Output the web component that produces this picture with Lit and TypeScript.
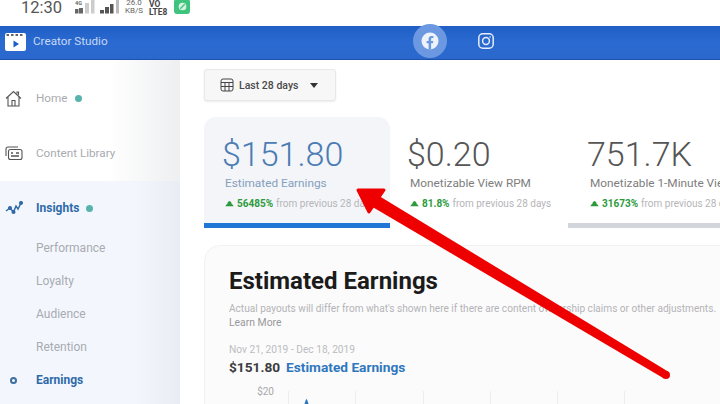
import { LitElement, html, css, svg } from "lit";
import { customElement } from "lit/decorators.js";

const up = html`<svg class="up" viewBox="0 0 10 7" width="9" height="7"><path d="M0.5 6.5 Q1 4.6 2.4 4.4 Q2.8 1 5 0.6 Q7.2 1 7.6 4.4 Q9 4.6 9.5 6.5 Z" fill="#2c9a3c"/></svg>`;

@customElement("app-root")
export class AppRoot extends LitElement {
  static styles = css`
    :host { display: block; width: 720px; height: 404px; overflow: hidden; position: relative; background: #fff; font-family: Roboto, "Liberation Sans", sans-serif; }
    .status { height: 26px; background: #fff; display: flex; align-items: flex-start; padding-left: 21px; color: #555; overflow: hidden; }
    .time { font-size: 16.5px; line-height: 16px; width: 40px; flex: none; white-space: nowrap; }
    .sig1 { display: block; margin-left: 7px; flex: none; }
    .sig2 { display: block; margin-left: 5px; flex: none; }
    .speed { font-size: 8px; line-height: 7.5px; width: 20px; text-align: center; margin-left: 4px; margin-top: -1px; color: #666; flex: none; }
    .volte { font-size: 8.4px; line-height: 8px; font-weight: 700; width: 19px; margin-left: 5px; color: #444; flex: none; }
    .appi { width: 16px; height: 15px; border-radius: 3px; background: #3fc47e; margin-left: 6px; margin-top: -1px; display: flex; align-items: center; justify-content: center; flex: none; }
    .header { height: 34px; background: linear-gradient(#1f5fc6, #2b6ad0 50%, #2a68cd); border-bottom: 1px solid #1d52ad; box-sizing: border-box; display: flex; align-items: center; position: relative; padding-left: 5px; color: #c6d8f5; font-size: 11.7px; }
    .logo { margin-top: -1px; flex: none; }
    .brand { margin-left: 7px; margin-top: -3px; }
    .tabs { position: absolute; left: 413px; top: -2px; display: flex; align-items: center; gap: 31px; }
    .fb { width: 34px; height: 34px; border-radius: 50%; background: #6b98e0; display: flex; align-items: center; justify-content: center; }
    .main { display: flex; height: 344px; }
    .side { width: 180px; flex: none; display: flex; flex-direction: column; }
    .top { height: 121px; background: linear-gradient(90deg, #fff 60%, #eeeff1); box-sizing: border-box; }
    .ins { flex: 1; background: linear-gradient(90deg, #f3f7fd 75%, #e9edf3); display: flex; flex-direction: column; box-sizing: border-box; padding-left: 36px; }
    .item { display: flex; align-items: center; height: 20px; font-size: 11.7px; color: #a9abb0; gap: 8px; }
    .top-list { display: flex; flex-direction: column; gap: 35px; padding: 28px 0 0 5px; }
    .item .ico { width: 23px; flex: none; display: flex; }
    .dot { width: 7px; height: 7px; border-radius: 50%; background: #58b3ae; }
    .insrow { display: flex; align-items: center; gap: 7px; height: 20px; margin: 17px 0 0 -31px; font-size: 12px; }
    .insrow .ico { width: 23px; margin-right: 1px; flex: none; display: flex; }
    .strong { color: #2f6aa8; font-weight: 700; }
    .sub { height: 20px; margin-top: 12.9px; font-size: 12px; color: #a9abb0; display: flex; align-items: center; position: relative; }
    .sub.first { margin-top: 20px; }
    .sub.strong { color: #2f6aa8; font-weight: 700; }
    .ring { position: absolute; left: -26px; top: 7px; width: 7px; height: 7px; border-radius: 50%; border: 2px solid #3d6f9f; box-sizing: border-box; }
    .content { flex: 1; min-width: 0; padding: 9px 0 0 24px; background: #fff; overflow: hidden; }
    .date { width: 132px; height: 32px; box-sizing: border-box; background: #f7f7f8; border: 1px solid #e8e8ea; border-radius: 3px; display: flex; align-items: center; padding-left: 15px; gap: 5px; font-size: 10.5px; color: #4a4a4a; font-weight: 500; box-shadow: 0 1px 2px #ececec; }
    .caret { width: 0; height: 0; border-left: 4.5px solid transparent; border-right: 4.5px solid transparent; border-top: 5px solid #333; margin-left: 7px; }
    .stats { display: flex; margin-top: 16px; height: 111px; width: 600px; }
    .stat { box-sizing: border-box; height: 111px; padding: 18px 0 0 18px; width: 186px; white-space: nowrap; }
    .stat.on { background: #f3f5f8; border-bottom: 5px solid #1f76d6; border-radius: 12px 12px 0 0; }
    .stat.s2 { width: 178px; padding-left: 17px; }
    .stat.s3 { flex: 1; padding-left: 19px; border-bottom: 5px solid #d3d5dc; }
    .v { font-size: 34px; line-height: 38px; font-weight: 300; color: #555; }
    .on .v { color: #4b7cb4; }
    .l { font-size: 11.8px; line-height: 14px; margin-top: 3px; color: #7d7d7d; padding-left: 3px; }
    .on .l { color: #85a0bd; }
    .d { font-size: 10px; line-height: 13px; margin-top: 7px; padding-left: 3px; color: #b5b5b8; display: flex; align-items: center; gap: 3px; }
    .d b { color: #2c9a3c; font-weight: 700; }
    .panel { margin-top: 17px; height: 200px; width: 600px; background: #fbfbfc; border: 1px solid #f1f1f3; border-radius: 16px 0 0 0; box-sizing: border-box; padding: 20px 0 0 24px; }
    .h { font-size: 24px; line-height: 30px; font-weight: 700; color: #1b1b1b; }
    .p { font-size: 10.1px; line-height: 13.5px; margin-top: 6px; color: #b4b4b6; white-space: nowrap; }
    .lm { font-size: 10.4px; line-height: 13px; color: #98989b; margin-top: 0; }
    .range { font-size: 10.2px; line-height: 13px; color: #bcbcbe; margin-top: 14px; }
    .tot { display: flex; gap: 6px; font-size: 13.7px; line-height: 16px; font-weight: 700; color: #3c3c3c; margin-top: 3px; }
    .tot span { color: #2f77bd; }
    .chart { display: flex; margin-top: 11px; margin-left: -1px; }
    .yl { width: 46px; font-size: 10px; color: #a8a8a8; line-height: 12px; text-align: right; flex: none; }
    .col { width: 67.3px; height: 30px; border-left: 1px solid #eeeef0; box-sizing: border-box; position: relative; margin-top: 5px; flex: none; }
    .first-col { margin-left: 14px; }
    .spike { position: absolute; left: 13px; top: 7px; }
    .arrow { position: absolute; left: 0; top: 0; pointer-events: none; }
  `;
  render() {
    return html`
      <div class="status">
        <span class="time">12:30</span>
        <svg class="sig1" width="27" height="14" viewBox="0 0 27 14"><rect x="7" y="9" width="3.5" height="4.5" fill="#666"/><rect x="11" y="8" width="4" height="5.5" fill="#666"/><rect x="17" y="3" width="4" height="10.5" fill="#ccc"/><rect x="23" y="0" width="3.5" height="13.5" fill="#ccc"/><text x="7" y="5" font-size="5.5" fill="#666" font-weight="700">4G</text></svg>
        <svg class="sig2" width="20" height="14" viewBox="0 0 20 14"><rect x="0" y="10" width="4" height="3.5" fill="#555"/><rect x="5" y="7" width="4" height="6.5" fill="#555"/><rect x="10" y="4" width="3.5" height="9.5" fill="#555"/><rect x="16" y="0" width="3" height="13.5" fill="#bbb"/></svg>
        <div class="speed">26.0<br />KB/S</div>
        <div class="volte">VO<br />LTE8</div>
        <div class="appi"><svg width="11" height="11" viewBox="0 0 10 10"><circle cx="5" cy="5" r="3.5" fill="#d8f3e3"/><path d="M3 7 L7 3" stroke="#3fc47e" stroke-width="1.2"/></svg></div>
      </div>
      <div class="header">
        <svg class="logo" width="21" height="18" viewBox="0 0 21 18"><rect x="0" y="0" width="21" height="18" rx="2" fill="#fff"/><path d="M1.5 2 h2.5 M6 2 h2.5 M10.5 2 h2.5 M15 2 h2.5" stroke="#333" stroke-width="1.3"/><path d="M8.5 7.5 L14 11 L8.5 14.5 Z" fill="#1f5fc6"/></svg>
        <span class="brand">Creator Studio</span>
        <div class="tabs">
          <div class="fb"><svg width="18" height="18" viewBox="0 0 18 18"><circle cx="9" cy="9" r="8.5" fill="#eef3fb"/><path d="M7.6 17.5 V11.3 H5.6 V8.9 H7.6 V7.1 C7.6 5 8.8 3.9 10.7 3.9 C11.6 3.9 12.4 4 12.4 4 V6 H11.4 C10.4 6 10.1 6.6 10.1 7.2 V8.9 H12.3 L11.9 11.3 H10.1 V17.5 Z" fill="#6b98e0"/></svg></div>
          <svg width="16" height="16" viewBox="0 0 16 16" fill="none" stroke="#e6eefb" stroke-width="1.5"><rect x="0.8" y="0.8" width="14.4" height="14.4" rx="4"/><circle cx="8" cy="8" r="3.4"/><circle cx="12" cy="4" r="0.8" fill="#e6eefb" stroke="none"/></svg>
        </div>
      </div>
      <div class="main">
        <div class="side">
          <div class="top">
            <div class="top-list">
              <div class="item">
                <span class="ico"><svg width="17" height="17" viewBox="0 0 17 17" fill="none" stroke="#555" stroke-width="1.1"><path d="M1 8.5 L8.5 1.5 L16 8.5 M3 7 V16 H14 V7 M12 3.5 V2 H13.5 V5 M7 16 V10.5 H10 V16"/></svg></span>
                <span>Home</span><span class="dot"></span>
              </div>
              <div class="item">
                <span class="ico"><svg width="18" height="15" viewBox="0 0 18 15" fill="none" stroke="#555" stroke-width="1.1"><path d="M1 10 V3 Q1 1 3 1 H13"/><rect x="3.5" y="3.5" width="13.5" height="10" rx="2"/><path d="M6 7 h2 M11 7 h3 M6 10 h8" stroke-width="1.4"/></svg></span>
                <span>Content Library</span>
              </div>
            </div>
          </div>
          <div class="ins">
            <div class="insrow">
              <span class="ico"><svg width="18" height="14" viewBox="0 0 18 14" fill="none" stroke="#2f6aa8" stroke-width="1.5"><path d="M1 10 L5 7 L8.5 11 L11 5 L13 8 L16 2"/><circle cx="5" cy="7" r="1.3" fill="#2f6aa8"/><circle cx="8.5" cy="11" r="1.3" fill="#2f6aa8"/><circle cx="16" cy="2" r="1.3" fill="#2f6aa8"/></svg></span>
              <span class="strong">Insights</span><span class="dot"></span>
            </div>
            <div class="sub first">Performance</div>
            <div class="sub">Loyalty</div>
            <div class="sub">Audience</div>
            <div class="sub">Retention</div>
            <div class="sub strong"><span class="ring"></span>Earnings</div>
          </div>
        </div>
        <div class="content">
          <div class="date">
            <svg width="14" height="14" viewBox="0 0 14 14" fill="none" stroke="#444" stroke-width="1"><rect x="1" y="1" width="12" height="12" rx="2"/><path d="M1 4.5 H13 M1 8.5 H13 M5 4.5 V13 M9 4.5 V13"/></svg>
            <span>Last 28 days</span><span class="caret"></span>
          </div>
          <div class="stats">
            <div class="stat on">
              <div class="v">$151.80</div>
              <div class="l">Estimated Earnings</div>
              <div class="d">${up}<b>56485%</b> from previous 28 days</div>
            </div>
            <div class="stat s2">
              <div class="v">$0.20</div>
              <div class="l">Monetizable View RPM</div>
              <div class="d">${up}<b>81.8%</b> from previous 28 days</div>
            </div>
            <div class="stat s3">
              <div class="v">751.7K</div>
              <div class="l">Monetizable 1-Minute Views</div>
              <div class="d">${up}<b>31673%</b> from previous 28 days</div>
            </div>
          </div>
          <div class="panel">
            <div class="h">Estimated Earnings</div>
            <div class="p">Actual payouts will differ from what's shown here if there are content ownership claims or other adjustments.</div>
            <div class="lm">Learn More</div>
            <div class="range">Nov 21, 2019 - Dec 18, 2019</div>
            <div class="tot">$151.80 <span>Estimated Earnings</span></div>
            <div class="chart">
              <div class="yl">$20</div>
              <div class="col first-col"><svg class="spike" width="9" height="14" viewBox="0 0 10 14"><path d="M0 14 L4 2 L5 0 L6 2 L10 14 Z" fill="#2f77bd"/></svg></div>
              <div class="col"></div><div class="col"></div><div class="col"></div><div class="col"></div><div class="col"></div>
            </div>
          </div>
        </div>
      </div>
      <svg class="arrow" width="720" height="404" viewBox="0 0 720 404">
        ${svg`<path d="M378.3 195.4 L668 371.6 L664 378.4 L371.7 206.6 Z" fill="#ee0000"/>
        <circle cx="666" cy="375" r="4" fill="#ee0000"/>
        <path d="M358 190 L384 190 L369 212 Z" fill="#ee0000" stroke="#ee0000" stroke-width="3" stroke-linejoin="round"/>`}
      </svg>
    `;
  }
}
